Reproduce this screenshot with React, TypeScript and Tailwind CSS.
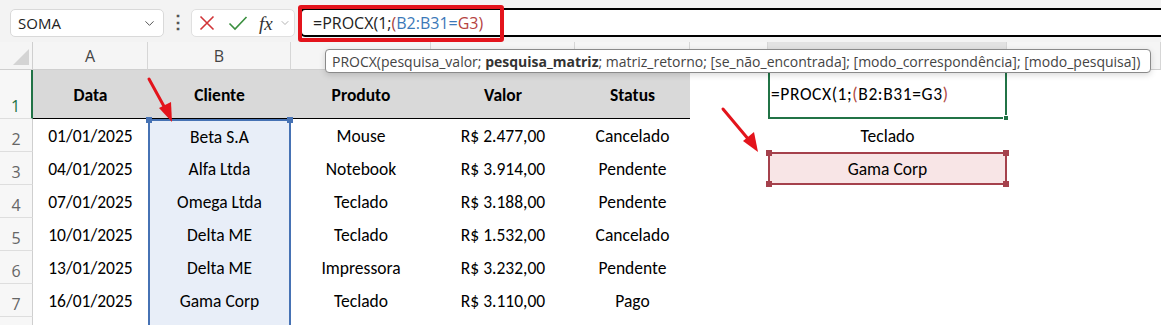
import { ChevronDown } from "lucide-react"

const uiFont = { fontFamily: '"Segoe UI", "Open Sans", sans-serif' }
const cellFont = { fontFamily: 'Calibri, Carlito, Lato, sans-serif' }

const data = [
  ["01/01/2025", "Beta S.A", "Mouse", "R$ 2.477,00", "Cancelado"],
  ["04/01/2025", "Alfa Ltda", "Notebook", "R$ 3.914,00", "Pendente"],
  ["07/01/2025", "Omega Ltda", "Teclado", "R$ 3.188,00", "Pendente"],
  ["10/01/2025", "Delta ME", "Teclado", "R$ 1.532,00", "Cancelado"],
  ["13/01/2025", "Delta ME", "Impressora", "R$ 3.232,00", "Pendente"],
  ["16/01/2025", "Gama Corp", "Teclado", "R$ 3.110,00", "Pago"],
]

// letters C..H sit under the function tooltip, so only A and B are drawn
const cols = ["A", "B", "C", "D", "E", "F", "G", "H"]
const shown = ["A", "B"]

function RowHead({ n, active }: { n?: number; active?: boolean }) {
  return (
    <div
      className={
        "flex items-end justify-center pb-[1px] bg-[#f7f7f7] border-b border-[#dedede] text-[16px] leading-[22px] " +
        (active ? "border-r-2 border-r-[#217346] text-[#217346]" : "border-r border-r-[#cfcfcf] text-[#666]")
      }
      style={uiFont}
    >
      {n}
    </div>
  )
}

function Handle({ className }: { className: string }) {
  return <span className={"absolute w-[6px] h-[6px] " + className} />
}

const cell = "flex items-center justify-center whitespace-nowrap text-[17.5px] pt-[2px]"

export default function App() {
  return (
    <div className="relative w-[1161px] h-[325px] overflow-hidden bg-white text-black">
      {/* toolbar */}
      <div className="flex items-start h-[42px] bg-[#f3f3f3]" style={uiFont}>
        <div className="ml-[10px] mt-[9px] w-[154px] h-[28px] flex items-center justify-between pl-[7px] pr-[6px] bg-white border border-[#d9d9d9] rounded-[5px]">
          <span className="text-[15px] text-[#222]">SOMA</span>
          <ChevronDown size={15} strokeWidth={1.6} className="text-[#555]" />
        </div>
        <div className="w-[27px] h-[42px] flex items-center justify-center text-[#555] text-[18px] font-bold">⋮</div>
        <div className="mt-[9px] w-[104px] h-[28px] flex items-center bg-white border border-[#e0e0e0] rounded-[5px] pl-[7px]">
          <svg width="16" height="16" viewBox="0 0 16 16" className="mr-[13px]">
            <path d="M1.5 1.5 L14.5 14.5 M14.5 1.5 L1.5 14.5" stroke="#d13438" strokeWidth="1.6" fill="none" />
          </svg>
          <svg width="20" height="16" viewBox="0 0 20 16" className="mr-[11px]">
            <path d="M1.5 8.5 L7 14 L18.5 2" stroke="#3a8f3f" strokeWidth="1.6" fill="none" />
          </svg>
          <span className="italic text-[19px] leading-none text-[#333] mr-[6px]" style={{ fontFamily: '"Liberation Serif", serif' }}>
            fx
          </span>
          <ChevronDown size={12} strokeWidth={1.5} className="text-[#999]" />
        </div>
        <div className="ml-[5px] mt-[8px] flex-1 h-[29px] flex items-center pl-[11px] bg-white border-y-2 border-l-2 border-black rounded-l-[5px] text-[16px] text-[#222]">
          <span className="whitespace-nowrap">
            =PROCX(1;<span className="text-[#a8433d]">(</span>
            <span className="text-[#3b78b8]">B2:B31=</span>
            <span className="text-[#b5433f]">G3)</span>
          </span>
        </div>
      </div>

      {/* sheet */}
      <div
        className="grid grid-cols-[33px_115px_143px_140px_144px_115px_78px_239px_1fr] grid-rows-[28px_49px_repeat(6,33px)_40px]"
        style={cellFont}
      >
        {/* column headers */}
        <div className="relative bg-[#f5f5f5] border-b border-r border-[#cfcfcf]">
          <svg width="18" height="18" viewBox="0 0 18 18" className="absolute right-[2px] bottom-[3px]">
            <path d="M17 1 L17 17 L1 17 Z" fill="#d4d4d4" />
          </svg>
        </div>
        {cols.map((c) => (
          <div
            key={`ch-${c}`}
            className={
              "flex items-center justify-center text-[16px] text-[#444] border-r border-[#d6d6d6] " +
              (c === "G" ? "bg-[#e2e2e2] border-b-2 border-b-[#217346]" : "bg-[#f5f5f5] border-b border-b-[#cfcfcf]")
            }
            style={uiFont}
          >
            {shown.includes(c) ? c : null}
          </div>
        ))}

        {/* row 1 */}
        <RowHead n={1} active />
        {["Data", "Cliente", "Produto", "Valor", "Status"].map((h) => (
          <div key={h} className={cell + " bg-[#d9d9d9] border-b border-black font-bold"}>
            {h}
          </div>
        ))}
        <div />
        <div className="relative flex items-center pl-[1px] border-2 border-[#217346] text-[17.5px] tracking-[0.6px] whitespace-nowrap">
          <span>
            =PROCX(1;<span className="text-[#b04a45]">(</span>B2:B31=G3<span className="text-[#b04a45]">)</span>
          </span>
          <Handle className="-right-[4px] -bottom-[4px] bg-[#217346] border border-white" />
        </div>
        <div />

        {/* data rows */}
        {data.map((r, i) => (
          <div key={`r-${i}`} className="contents">
            <RowHead n={i + 2} />
            <div className={cell}>{r[0]}</div>
            <div
              className={
                "relative bg-[#e8eef8] border-x-2 border-[#4672b4] " + cell + (i === 0 ? " border-t-2" : "")
              }
            >
              {r[1]}
              {i === 0 && (
                <>
                  <Handle className="-left-[4px] -top-[4px] bg-[#4672b4]" />
                  <Handle className="-right-[4px] -top-[4px] bg-[#4672b4]" />
                </>
              )}
            </div>
            <div className={cell}>{r[2]}</div>
            <div className={cell}>{r[3]}</div>
            <div className={cell}>{r[4]}</div>
            <div />
            {i === 0 ? (
              <div className={cell}>Teclado</div>
            ) : i === 1 ? (
              <div className={"relative bg-[#f8e5e6] border-2 border-[#a5414c] " + cell}>
                Gama Corp
                <Handle className="-left-[4px] -top-[4px] bg-[#a5414c]" />
                <Handle className="-right-[4px] -top-[4px] bg-[#a5414c]" />
                <Handle className="-left-[4px] -bottom-[4px] bg-[#a5414c]" />
                <Handle className="-right-[4px] -bottom-[4px] bg-[#a5414c]" />
              </div>
            ) : (
              <div />
            )}
            <div />
          </div>
        ))}

        {/* row 8 (partial, number out of view) */}
        <RowHead />
        <div />
        <div className="bg-[#e8eef8] border-x-2 border-[#4672b4]" />
        <div />
        <div />
        <div />
        <div />
        <div />
        <div />
      </div>

      {/* function tooltip */}
      <div
        className="absolute left-[325px] top-[49px] w-[826px] h-[24px] flex items-center pl-[6px] bg-white border border-[#8a8a8a] rounded-[4px] shadow-[0_2px_6px_rgba(0,0,0,0.15)] text-[14px] text-[#444] whitespace-nowrap overflow-hidden"
        style={uiFont}
      >
        <span>
          PROCX(pesquisa_valor; <b className="font-bold text-[#333]">pesquisa_matriz</b>; matriz_retorno; [se_não_encontrada]; [modo_correspondência]; [modo_pesquisa])
        </span>
      </div>

      {/* red highlight around the formula */}
      <div className="absolute left-[298px] top-[5px] w-[206px] h-[37px] border-4 border-[#e3141c] rounded-[3px] pointer-events-none" />

      {/* red arrows */}
      <svg className="absolute left-0 top-0 pointer-events-none" width="1161" height="325">
        <line x1="149" y1="79" x2="166" y2="110" stroke="#e3141c" strokeWidth="3" strokeLinecap="round" />
        <polygon points="172,122 159,108 171,102" fill="#e3141c" />
        <line x1="723" y1="109" x2="749" y2="140" stroke="#e3141c" strokeWidth="3" strokeLinecap="round" />
        <polygon points="758,152 743,141 754,132" fill="#e3141c" />
      </svg>
    </div>
  )
}
